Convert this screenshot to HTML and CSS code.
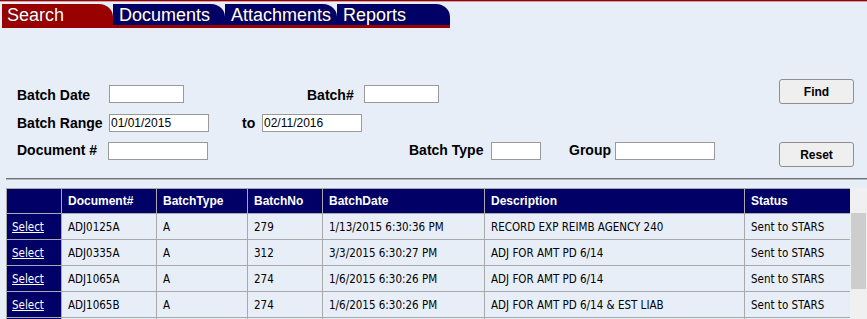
FILE: index.html
```html
<!DOCTYPE html>
<html>
<head>
<meta charset="utf-8">
<link rel="stylesheet" href="styles.css">
</head>
<body>
<div class="topline"></div>
<nav class="tabs">
  <div class="tabrow">
    <a class="tab active">Search</a>
    <a class="tab">Documents</a>
    <a class="tab">Attachments</a>
    <a class="tab">Reports</a>
  </div>
  <div class="tabbar"></div>
</nav>

<form class="search">
  <div class="fields">
    <div class="row r1">
      <label class="lbl w-date">Batch Date</label>
      <input class="inp w75" type="text">
      <label class="lbl w-batchno">Batch#</label>
      <input class="inp w75" type="text">
    </div>
    <div class="row r2">
      <label class="lbl w-range">Batch Range</label>
      <input class="inp w100" type="text" value="01/01/2015">
      <label class="lbl w-to">to</label>
      <input class="inp w100" type="text" value="02/11/2016">
    </div>
    <div class="row r3">
      <label class="lbl w-doc">Document #</label>
      <input class="inp w100" type="text">
      <label class="lbl w-type">Batch Type</label>
      <input class="inp w50" type="text">
      <label class="lbl w-group">Group</label>
      <input class="inp w100" type="text">
    </div>
  </div>
  <div class="buttons">
    <button type="button" class="btn">Find</button>
    <button type="button" class="btn reset">Reset</button>
  </div>
</form>

<div class="rule"></div>

<div class="grid-wrap">
  <div class="grid-scroll">
    <table class="grid">
      <colgroup>
        <col class="c1"><col class="c2"><col class="c3"><col class="c4"><col class="c5"><col class="c6"><col class="c7">
      </colgroup>
      <thead>
        <tr><th></th><th>Document#</th><th>BatchType</th><th>BatchNo</th><th>BatchDate</th><th>Description</th><th>Status</th></tr>
      </thead>
      <tbody>
        <tr><td class="sel"><a href="#">Select</a></td><td>ADJ0125A</td><td>A</td><td>279</td><td>1/13/2015 6:30:36 PM</td><td>RECORD EXP REIMB AGENCY 240</td><td>Sent to STARS</td></tr>
        <tr><td class="sel"><a href="#">Select</a></td><td>ADJ0335A</td><td>A</td><td>312</td><td>3/3/2015 6:30:27 PM</td><td>ADJ FOR AMT PD 6/14</td><td>Sent to STARS</td></tr>
        <tr><td class="sel"><a href="#">Select</a></td><td>ADJ1065A</td><td>A</td><td>274</td><td>1/6/2015 6:30:26 PM</td><td>ADJ FOR AMT PD 6/14</td><td>Sent to STARS</td></tr>
        <tr><td class="sel"><a href="#">Select</a></td><td>ADJ1065B</td><td>A</td><td>274</td><td>1/6/2015 6:30:26 PM</td><td>ADJ FOR AMT PD 6/14 &amp; EST LIAB</td><td>Sent to STARS</td></tr>
        <tr><td class="sel"></td><td></td><td></td><td></td><td></td><td></td><td></td></tr>
      </tbody>
    </table>
  </div>
  <div class="scrollbar"><div class="thumb"></div></div>
</div>
</body>
</html>
```

FILE: styles.css
```css
html, body {
  margin: 0;
  padding: 0;
  background: #e8eef8;
  overflow: hidden;
}
body {
  font-family: "Liberation Sans", Arial, sans-serif;
  color: #000;
  height: 319px;
}

.topline {
  height: 1px;
  background: #990000;
  border-bottom: 1px solid #c9a0a8;
}

.tabs {
  margin: 2px 0 0 2px;
  width: 448px;
}
.tabrow {
  display: flex;
}
.tab {
  width: 112px;
  height: 21px;
  box-sizing: border-box;
  padding: 2px 0 0 6px;
  background: #000066;
  color: #fff;
  font-size: 18px;
  line-height: 19px;
  border-top-right-radius: 14px 13px;
  text-shadow: 0 0 1px #300;
  white-space: nowrap;
  overflow: hidden;
}
.tab.active {
  background: #990000;
  padding-left: 5px;
  width: 111px;
}
.tab:last-child {
  width: 113px;
}
.tabbar {
  height: 3px;
  background: #990000;
}

.search {
  display: flex;
  justify-content: space-between;
  align-items: flex-start;
  margin: 0;
}
.fields {
  padding: 57px 0 0 17px;
}
.row {
  display: flex;
  align-items: baseline;
  height: 18px;
}
.r2 { margin-top: 11px; }
.r3 { margin-top: 10px; }

.lbl {
  font-weight: bold;
  font-size: 14px;
  flex: none;
  white-space: nowrap;
}
.r1 .lbl { position: relative; top: 2px; }
.r2 .lbl { position: relative; top: 1px; }
.w-date { width: 92px; }
.w-batchno { width: 57px; margin-left: 123px; }
.w-range { width: 92px; }
.w-to { width: 20px; margin-left: 33px; }
.w-doc { width: 91px; }
.w-type { width: 82px; margin-left: 201px; }
.w-group { width: 46px; margin-left: 28px; }

.inp {
  flex: none;
  box-sizing: border-box;
  height: 18px;
  border: 1px solid #9a9a9a;
  background: #fff;
  padding: 0 1px;
  margin: 0;
  font-family: "Liberation Sans", Arial, sans-serif;
  font-size: 12px;
  color: #000;
  outline: none;
}
.w75 { width: 75px; }
.w100 { width: 100px; }
.w50 { width: 50px; }

.buttons {
  display: flex;
  flex-direction: column;
  padding: 51px 13px 0 0;
}
.btn {
  width: 75px;
  height: 25px;
  box-sizing: border-box;
  margin: 0;
  padding: 0;
  background: #efefef;
  border: 1px solid #8f8f8f;
  border-radius: 3px;
  font-family: "Liberation Sans", Arial, sans-serif;
  font-weight: bold;
  font-size: 12px;
  color: #000;
}
.btn.reset {
  margin-top: 38px;
}

.rule {
  margin: 11px 0 0 6px;
  border-top: 1px solid #707070;
  border-bottom: 1px solid #b4b8c0;
}

.grid-wrap {
  display: flex;
  margin: 8px 0 0 6px;
  height: 131px;
  overflow: hidden;
}
.grid-scroll {
  width: 844px;
  flex: none;
}
.grid {
  border-collapse: collapse;
  table-layout: fixed;
  width: 845px;
}
.c1 { width: 55px; }
.c2 { width: 95px; }
.c3 { width: 91px; }
.c4 { width: 75px; }
.c5 { width: 162px; }
.c6 { width: 260px; }
.c7 { width: 106px; }

.grid th, .grid td {
  border: 1px solid #a9a9a9;
  text-align: left;
  white-space: nowrap;
  overflow: hidden;
  padding: 0 0 0 6px;
}
.grid th {
  background: #000066;
  color: #fff;
  font-family: "Liberation Sans", Arial, sans-serif;
  font-weight: bold;
  font-size: 12px;
  height: 24px;
}
.grid td {
  font-family: "DejaVu Sans Condensed", "DejaVu Sans", sans-serif;
  font-size: 11.5px;
  height: 25px;
  color: #000;
}
.grid td.sel {
  background: #000066;
  padding-left: 5px;
}
.grid td.sel a {
  color: #fff;
  text-decoration: underline;
}

.scrollbar {
  width: 17px;
  flex: none;
  background: #f0f0f0;
}
.thumb {
  margin: 25px 0 0 1px;
  width: 15px;
  height: 76px;
  background: #cdcdcd;
}
```
